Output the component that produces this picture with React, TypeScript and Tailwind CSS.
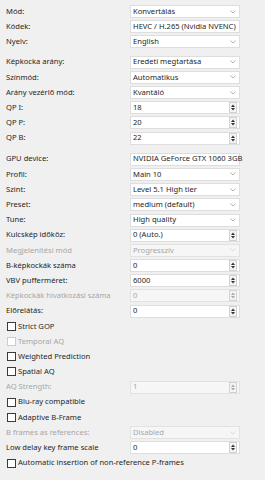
import React from 'react';

type Row =
    | { kind: 'combo'; label: string; value: string; disabled?: boolean }
    | { kind: 'spin'; label: string; value: string; disabled?: boolean }
    | { kind: 'check'; label: string; disabled?: boolean };

const group1: Row[] = [
    { kind: 'combo', label: 'Mód:', value: 'Konvertálás' },
    { kind: 'combo', label: 'Kódek:', value: 'HEVC / H.265 (Nvidia NVENC)' },
    { kind: 'combo', label: 'Nyelv:', value: 'English' },
];

const group2: Row[] = [
    { kind: 'combo', label: 'Képkocka arány:', value: 'Eredeti megtartása' },
    { kind: 'combo', label: 'Színmód:', value: 'Automatikus' },
    { kind: 'combo', label: 'Arány vezérlő mód:', value: 'Kvantáló' },
    { kind: 'spin', label: 'QP I:', value: '18' },
    { kind: 'spin', label: 'QP P:', value: '20' },
    { kind: 'spin', label: 'QP B:', value: '22' },
];

const group3: Row[] = [
    { kind: 'combo', label: 'GPU device:', value: 'NVIDIA GeForce GTX 1060 3GB' },
    { kind: 'combo', label: 'Profil:', value: 'Main 10' },
    { kind: 'combo', label: 'Szint:', value: 'Level 5.1 High tier' },
    { kind: 'combo', label: 'Preset:', value: 'medium (default)' },
    { kind: 'combo', label: 'Tune:', value: 'High quality' },
    { kind: 'spin', label: 'Kulcskép időköz:', value: '0 (Auto.)' },
    { kind: 'combo', label: 'Megjelenítési mód', value: 'Progresszív', disabled: true },
    { kind: 'spin', label: 'B-képkockák száma', value: '0' },
    { kind: 'spin', label: 'VBV pufferméret:', value: '6000' },
    { kind: 'spin', label: 'Képkockák hivatkozási száma', value: '0', disabled: true },
    { kind: 'spin', label: 'Előrelátás:', value: '0' },
    { kind: 'check', label: 'Strict GOP' },
    { kind: 'check', label: 'Temporal AQ', disabled: true },
    { kind: 'check', label: 'Weighted Prediction' },
    { kind: 'check', label: 'Spatial AQ' },
    { kind: 'spin', label: 'AQ Strength:', value: '1', disabled: true },
    { kind: 'check', label: 'Blu-ray compatible' },
    { kind: 'check', label: 'Adaptive B-Frame' },
    { kind: 'combo', label: 'B frames as references:', value: 'Disabled', disabled: true },
    { kind: 'spin', label: 'Low delay key frame scale', value: '0' },
    { kind: 'check', label: 'Automatic insertion of non-reference P-frames' },
];

function Chevron({ disabled }: { disabled?: boolean }) {
    return (
        <svg width="6" height="4" viewBox="0 0 6 4" className="mr-[3px]">
            <path d="M0.5 0.5 L3 3 L5.5 0.5" fill="none" stroke={disabled ? '#d2d2d2' : '#a0a0a0'} strokeWidth="0.8" />
        </svg>
    );
}

function SpinArrows({ disabled }: { disabled?: boolean }) {
    const c = disabled ? '#a8a8a8' : '#333';
    return (
        <div className="w-[8px] h-[11px] mr-[2px] border border-[#d2d2d2] bg-[#f4f4f4] flex flex-col items-center justify-center gap-[1px]">
            <svg width="4" height="3" viewBox="0 0 4 3"><path d="M0 3 L2 0.5 L4 3 Z" fill={c} /></svg>
            <svg width="4" height="3" viewBox="0 0 4 3"><path d="M0 0 L2 2.5 L4 0 Z" fill={c} /></svg>
        </div>
    );
}

function RowView({ row }: { row: Row }) {
    if (row.kind === 'check') {
        return (
            <div className="h-[15.2px] flex items-center pl-[7px]">
                <div className={`w-[9px] h-[9px] border bg-white ${row.disabled ? 'border-[#cccccc]' : 'border-[#3a3a3a]'}`} />
                <span className={`ml-[2px] ${row.disabled ? 'text-[#a6a6a6]' : 'text-[#262626]'}`}>{row.label}</span>
            </div>
        );
    }
    return (
        <div className="h-[15.2px] flex items-center">
            <span className={`w-[130px] pl-[6px] whitespace-nowrap ${row.disabled ? 'text-[#a6a6a6]' : 'text-[#262626]'}`}>
                {row.label}
            </span>
            <div
                className={`w-[110px] h-[13px] border flex items-center justify-between ${
                    row.disabled ? 'border-[#e2e2e2] bg-[#f6f6f6]' : 'border-[#dedede] bg-white'
                }`}
            >
                <span className={`pl-[2px] whitespace-nowrap ${row.disabled ? 'text-[#a6a6a6]' : 'text-[#262626]'}`}>
                    {row.value}
                </span>
                {row.kind === 'combo' ? <Chevron disabled={row.disabled} /> : <SpinArrows disabled={row.disabled} />}
            </div>
        </div>
    );
}

export default function App() {
    return (
        <div
            className="w-[265px] h-[480px] bg-[#f0f0f0] overflow-hidden pt-[4px] text-[7.6px] leading-none"
            style={{ fontFamily: '"Noto Sans", "Liberation Sans", sans-serif' }}
        >
            {group1.map((r, i) => <RowView key={i} row={r} />)}
            <div className="h-[5px]" />
            {group2.map((r, i) => <RowView key={i} row={r} />)}
            <div className="h-[6px]" />
            {group3.map((r, i) => <RowView key={i} row={r} />)}
        </div>
    );
}
